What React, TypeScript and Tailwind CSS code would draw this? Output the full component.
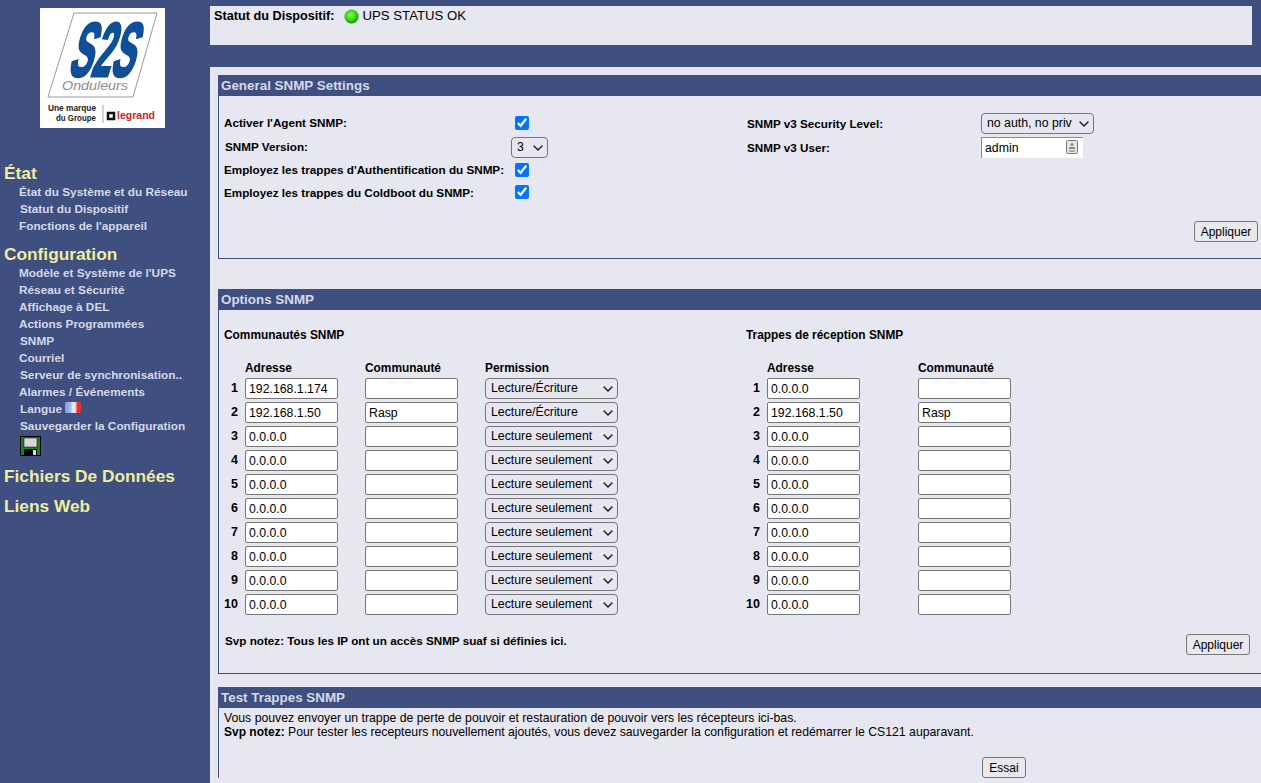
import { ChevronDown } from 'lucide-react'

const etat = [
  { label: 'État du Système et du Réseau', indent: 'ml-[19px]' },
  { label: 'Statut du Dispositif', indent: 'ml-5' },
  { label: "Fonctions de l'appareil", indent: 'ml-[19px]' },
]

const config = [
  { label: "Modèle et Système de l'UPS", indent: 'ml-[19px]' },
  { label: 'Réseau et Sécurité', indent: 'ml-[19px]' },
  { label: 'Affichage à DEL', indent: 'ml-[19px]' },
  { label: 'Actions Programmées', indent: 'ml-[19px]' },
  { label: 'SNMP', indent: 'ml-5' },
  { label: 'Courriel', indent: 'ml-[19px]' },
  { label: 'Serveur de synchronisation..', indent: 'ml-5' },
  { label: 'Alarmes / Événements', indent: 'ml-[19px]' },
]

const communities = [
  ['192.168.1.174', '', 'Lecture/Écriture'],
  ['192.168.1.50', 'Rasp', 'Lecture/Écriture'],
  ['0.0.0.0', '', 'Lecture seulement'],
  ['0.0.0.0', '', 'Lecture seulement'],
  ['0.0.0.0', '', 'Lecture seulement'],
  ['0.0.0.0', '', 'Lecture seulement'],
  ['0.0.0.0', '', 'Lecture seulement'],
  ['0.0.0.0', '', 'Lecture seulement'],
  ['0.0.0.0', '', 'Lecture seulement'],
  ['0.0.0.0', '', 'Lecture seulement'],
]

const traps = [
  ['0.0.0.0', ''],
  ['192.168.1.50', 'Rasp'],
  ['0.0.0.0', ''],
  ['0.0.0.0', ''],
  ['0.0.0.0', ''],
  ['0.0.0.0', ''],
  ['0.0.0.0', ''],
  ['0.0.0.0', ''],
  ['0.0.0.0', ''],
  ['0.0.0.0', ''],
]

function Logo() {
  return (
    <svg width="125" height="120" viewBox="0 0 125 120" className="block bg-white">
      <polygon points="34,5 117,5 93,89 8,89" fill="none" stroke="#9a9a9a" strokeWidth="1" />
      <text transform="translate(27,68) skewX(-17)" textLength="65" lengthAdjust="spacingAndGlyphs" fontFamily="Liberation Sans" fontWeight="700" fontSize="76" fill="#0f4f9a" stroke="#0f4f9a" strokeWidth="3">S2S</text>
      <text x="22" y="82" textLength="66" lengthAdjust="spacingAndGlyphs" fontFamily="Liberation Sans" fontStyle="italic" fontSize="13" fill="#8c8c8c">Onduleurs</text>
      <text x="8" y="103" textLength="48" lengthAdjust="spacingAndGlyphs" fontFamily="Liberation Sans" fontWeight="700" fontSize="8.5" fill="#222">Une marque</text>
      <text x="16" y="113" textLength="40" lengthAdjust="spacingAndGlyphs" fontFamily="Liberation Sans" fontWeight="700" fontSize="8.5" fill="#222">du Groupe</text>
      <line x1="63" y1="97" x2="63" y2="115" stroke="#aaa" />
      <rect x="68" y="105" width="6" height="6" fill="none" stroke="#111" strokeWidth="2.5" />
      <text x="77" y="111" textLength="38" lengthAdjust="spacingAndGlyphs" fontFamily="Liberation Sans" fontWeight="700" fontSize="11.5" fill="#d4212a">legrand</text>
    </svg>
  )
}

function Flag() {
  return (
    <svg width="16" height="11" viewBox="0 0 16 11" className="ml-[3px] inline-block align-[0px]">
      <defs>
        <linearGradient id="flag" x1="0" x2="1" y1="0" y2="0">
          <stop offset="0%" stopColor="#7f98e0" />
          <stop offset="35%" stopColor="#a9b9ec" />
          <stop offset="50%" stopColor="#f0f0f6" />
          <stop offset="68%" stopColor="#f0c8c8" />
          <stop offset="75%" stopColor="#e03a3a" />
          <stop offset="100%" stopColor="#d83030" />
        </linearGradient>
      </defs>
      <rect width="16" height="11" rx="1" fill="url(#flag)" />
    </svg>
  )
}

function Floppy() {
  return (
    <svg width="21" height="20" viewBox="0 0 21 20" className="block">
      <rect x="0.5" y="0.5" width="20" height="19" fill="#0a8a1e" stroke="#000" />
      <rect x="4" y="2" width="13" height="9" fill="#d8d8d8" stroke="#000" strokeWidth="0.5" />
      <rect x="4" y="13" width="13" height="6" fill="#000" />
      <rect x="13" y="14" width="3" height="5" fill="#d8d8d8" />
    </svg>
  )
}

function Sidebar() {
  const link = 'h-[17px] text-[11.8px] leading-[17px] font-bold text-[#d6d9e8]'
  const head = 'ml-1 text-[17.3px] font-bold text-[#eeee9c] leading-[20px]'
  return (
    <aside className="w-[210px] shrink-0 bg-[#3f4f7f]">
      <div className="mt-2 ml-10">
        <Logo />
      </div>
      <h2 className={`${head} mt-[35px]`}>État</h2>
      <div className="mt-[1px]">
        {etat.map((l) => (
          <div key={l.label} className={`${link} ${l.indent}`}>{l.label}</div>
        ))}
      </div>
      <h2 className={`${head} mt-[9px]`}>Configuration</h2>
      <div className="mt-[1px]">
        {config.map((l) => (
          <div key={l.label} className={`${link} ${l.indent}`}>{l.label}</div>
        ))}
        <div className={`${link} ml-5`}>Langue<Flag /></div>
        <div className={`${link} ml-5`}>Sauvegarder la Configuration</div>
        <div className="mt-[1px] ml-5">
          <Floppy />
        </div>
      </div>
      <h2 className={`${head} mt-[10px]`}>Fichiers De Données</h2>
      <h2 className={`${head} mt-[10px]`}>Liens Web</h2>
    </aside>
  )
}

function PanelHead({ title }: { title: string }) {
  return (
    <div className="h-[21px] bg-[#3f4f7f] pl-[2px] text-[13.4px] leading-[22px] font-bold text-[#d6d9e8]">
      {title}
    </div>
  )
}

function TextBox({ value, className = '' }: { value: string; className?: string }) {
  return (
    <input
      readOnly
      value={value}
      className={`h-[21px] w-[93px] rounded-[2px] border border-[#767676] bg-white px-[3px] text-[12.3px] text-black ${className}`}
    />
  )
}

function Dropdown({ value, className = '' }: { value: string; className?: string }) {
  return (
    <div className={`relative h-[21px] ${className}`}>
      <select
        value={value}
        onChange={() => {}}
        className="h-full w-full appearance-none rounded-[4px] border border-[#767676] bg-[#e6e7f0] pl-[5px] text-[12.3px] text-black"
      >
        <option>{value}</option>
      </select>
      <ChevronDown size={16} strokeWidth={2.25} className="pointer-events-none absolute top-[3px] right-[2px] text-[#222]" />
    </div>
  )
}

function Btn({ label, className = '' }: { label: string; className?: string }) {
  return (
    <button className={`h-[21px] rounded-[3px] border border-[#767676] bg-[#e9e9ed] text-[12px] text-black ${className}`}>
      {label}
    </button>
  )
}

function CheckRow({ label, height, labelClass = '' }: { label: string; height: string; labelClass?: string }) {
  return (
    <div className={`flex items-center ${height}`}>
      <span className={`w-[291px] font-bold ${labelClass}`}>{label}</span>
      <input type="checkbox" readOnly checked className="m-0 block h-[14px] w-[14px]" />
    </div>
  )
}

function GeneralSettings() {
  return (
    <section className="h-[184px] border-b border-l border-[#3f4f7f]">
      <PanelHead title="General SNMP Settings" />
      <div className="flex pt-[15px] pl-[5px] text-[11.7px]">
        <div className="w-[523px]">
          <CheckRow label="Activer l'Agent SNMP:" height="h-6" />
          <div className="flex h-6 items-center">
            <span className="w-[287px] pl-px font-bold">SNMP Version:</span>
            <Dropdown value="3" className="w-[37px]" />
          </div>
          <CheckRow label="Employez les trappes d'Authentification du SNMP:" height="h-[22px]" />
          <CheckRow label="Employez les trappes du Coldboot du SNMP:" height="h-[22px]" labelClass="pt-px" />
        </div>
        <div>
          <div className="flex h-6 items-center">
            <span className="w-[234px] pt-px font-bold">SNMP v3 Security Level:</span>
            <Dropdown value="no auth, no priv" className="w-[113px]" />
          </div>
          <div className="flex h-6 items-center">
            <span className="w-[234px] pt-px font-bold">SNMP v3 User:</span>
            <div className="relative">
              <input
                readOnly
                value="admin"
                className="h-[21px] w-[102px] border-t border-l border-[#8a8a8a] bg-white px-[3px] text-[12.3px] text-black"
              />
              <svg width="12" height="14" viewBox="0 0 12 14" className="absolute top-[3px] right-[5px]">
                <rect x="0.5" y="0.5" width="11" height="13" rx="1" fill="#e6e6e6" stroke="#777" />
                <circle cx="6" cy="4.5" r="1.5" fill="#888" />
                <rect x="3" y="7" width="6" height="2" fill="#888" />
                <rect x="3" y="10" width="6" height="2" fill="#aaa" />
              </svg>
            </div>
          </div>
        </div>
      </div>
      <div className="mt-[18px] flex justify-end pr-[3px]">
        <Btn label="Appliquer" className="w-16" />
      </div>
    </section>
  )
}

function RowNumber({ n }: { n: number }) {
  return <span className="w-[14px] text-right text-[12.5px] font-bold">{n}</span>
}

function OptionsSnmp() {
  return (
    <section className="mt-[30px] h-[385px] border-b border-l border-[#3f4f7f]">
      <PanelHead title="Options SNMP" />
      <div className="flex pt-[17px] pl-[5px] text-[11.9px]">
        <div className="w-[522px]">
          <div className="h-[16px] leading-[16px] font-bold">Communautés SNMP</div>
          <div className="mt-[17px] flex h-[17px] pl-[21px] leading-[17px] font-bold">
            <span className="w-[120px]">Adresse</span>
            <span className="w-[120px]">Communauté</span>
            <span>Permission</span>
          </div>
          <div className="mt-[1px] flex flex-col gap-[3px]">
            {communities.map((row, i) => (
              <div key={i} className="flex h-[21px] items-center">
                <RowNumber n={i + 1} />
                <TextBox value={row[0]} className="ml-[7px]" />
                <TextBox value={row[1]} className="ml-[27px]" />
                <Dropdown value={row[2]} className="ml-[27px] w-[133px]" />
              </div>
            ))}
          </div>
        </div>
        <div>
          <div className="h-[16px] leading-[16px] font-bold">Trappes de réception SNMP</div>
          <div className="mt-[17px] flex h-[17px] pl-[21px] leading-[17px] font-bold">
            <span className="w-[151px]">Adresse</span>
            <span>Communauté</span>
          </div>
          <div className="mt-[1px] flex flex-col gap-[3px]">
            {traps.map((row, i) => (
              <div key={i} className="flex h-[21px] items-center">
                <RowNumber n={i + 1} />
                <TextBox value={row[0]} className="ml-[7px]" />
                <TextBox value={row[1]} className="ml-[58px]" />
              </div>
            ))}
          </div>
        </div>
      </div>
      <div className="mt-[19px] flex items-start justify-between pr-[11px] pl-[6px]">
        <span className="-mt-[2px] text-[11.7px] font-bold">Svp notez: Tous les IP ont un accès SNMP suaf si définies ici.</span>
        <Btn label="Appliquer" className="w-16" />
      </div>
    </section>
  )
}

function TestTraps() {
  return (
    <section className="mt-[13px] border-l border-[#3f4f7f]">
      <PanelHead title="Test Trappes SNMP" />
      <div className="pt-[3px] pl-[5px] text-[12.25px] leading-[14px]">
        <p>Vous pouvez envoyer un trappe de perte de pouvoir et restauration de pouvoir vers les récepteurs ici-bas.</p>
        <p>
          <b className="text-[12px]">Svp notez:</b> Pour tester les recepteurs nouvellement ajoutés, vous devez sauvegarder la configuration et redémarrer le CS121 auparavant.
        </p>
      </div>
      <div className="mt-[18px] pl-[763px]">
        <Btn label="Essai" className="w-11" />
      </div>
    </section>
  )
}

export default function App() {
  return (
    <div className="flex h-[783px] overflow-hidden bg-[#e6e7f0] font-['Liberation_Sans',Arial,sans-serif] text-[12px] text-black">
      <Sidebar />
      <main className="min-w-0 flex-1">
        <div className="bg-[#3f4f7f] pt-[6px] pr-[9px] pb-[22px]">
          <div className="flex h-[39px] items-start bg-[#e6e7f0] pt-[2px] pl-1">
            <span className="text-[12.7px] leading-[16px] font-bold">Statut du Dispositif:</span>
            <svg width="15" height="15" viewBox="0 0 15 15" className="mt-px ml-[9px]">
              <defs>
                <radialGradient id="led" cx="45%" cy="40%" r="60%">
                  <stop offset="0%" stopColor="#8dff5a" />
                  <stop offset="70%" stopColor="#2ecb12" />
                  <stop offset="100%" stopColor="#0f8a08" />
                </radialGradient>
              </defs>
              <circle cx="7.5" cy="7.5" r="7" fill="url(#led)" />
            </svg>
            <span className="ml-1 text-[13.2px] leading-[16px]">UPS STATUS OK</span>
          </div>
        </div>
        <div className="pt-2 pl-2">
          <GeneralSettings />
          <OptionsSnmp />
          <TestTraps />
        </div>
      </main>
    </div>
  )
}
